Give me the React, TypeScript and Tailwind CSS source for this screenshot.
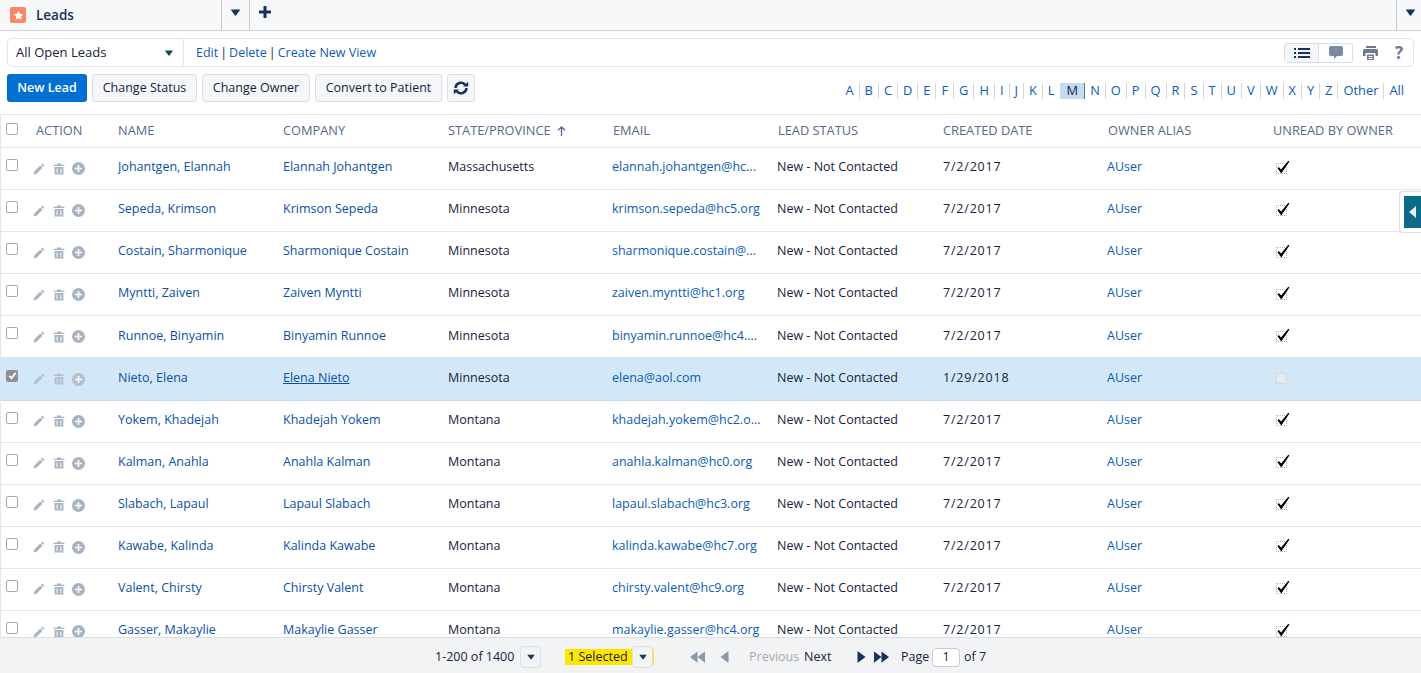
const LETTERS = "A B C D E F G H I J K L M N O P Q R S T U V W X Y Z Other All".split(" ");

const COLUMNS = ["NAME", "COMPANY", "STATE/PROVINCE", "EMAIL", "LEAD STATUS", "CREATED DATE", "OWNER ALIAS", "UNREAD BY OWNER"];

const LEADS = [
  ["Johantgen, Elannah", "Elannah Johantgen", "Massachusetts", "elannah.johantgen@hc..."],
  ["Sepeda, Krimson", "Krimson Sepeda", "Minnesota", "krimson.sepeda@hc5.org"],
  ["Costain, Sharmonique", "Sharmonique Costain", "Minnesota", "sharmonique.costain@..."],
  ["Myntti, Zaiven", "Zaiven Myntti", "Minnesota", "zaiven.myntti@hc1.org"],
  ["Runnoe, Binyamin", "Binyamin Runnoe", "Minnesota", "binyamin.runnoe@hc4...."],
  ["Nieto, Elena", "Elena Nieto", "Minnesota", "elena@aol.com"],
  ["Yokem, Khadejah", "Khadejah Yokem", "Montana", "khadejah.yokem@hc2.o..."],
  ["Kalman, Anahla", "Anahla Kalman", "Montana", "anahla.kalman@hc0.org"],
  ["Slabach, Lapaul", "Lapaul Slabach", "Montana", "lapaul.slabach@hc3.org"],
  ["Kawabe, Kalinda", "Kalinda Kawabe", "Montana", "kalinda.kawabe@hc7.org"],
  ["Valent, Chirsty", "Chirsty Valent", "Montana", "chirsty.valent@hc9.org"],
  ["Gasser, Makaylie", "Makaylie Gasser", "Montana", "makaylie.gasser@hc4.org"],
];

function Caret({ className }: { className: string }) {
  return (
    <svg viewBox="0 0 12 8" className={className} fill="currentColor" aria-hidden="true">
      <path d="M0.5 0.5h11L6.6 7.3a.8.8 0 0 1-1.2 0z" />
    </svg>
  );
}

function RowActions({ dim }: { dim: boolean }) {
  return (
    <div className={`flex items-center ${dim ? "text-[#b4bfcc]" : "text-[#a8b3c1]"}`}>
      <svg viewBox="0 0 12 12" className="w-3 h-3 ml-[32px]" fill="currentColor" aria-hidden="true">
        <path d="M9.2.6l2.2 2.2-1.2 1.2L8 1.800zM7.300 2.500l2.200 2.200-6 6L.6 11.400l.7-2.900z" />
      </svg>
      <svg viewBox="0 0 12 12" className="w-3 h-3 ml-[8px]" fill="currentColor" aria-hidden="true">
        <path d="M4 .5h4v1.200h3.400v1.200H.6V1.700H4zM1.600 4h8.800v7.600H1.600zM3.600 5.400v4.800h1V5.400zm3.800 0v4.800h1V5.400z" />
      </svg>
      <span className="ml-[7px] w-[13px] h-[13px] rounded-full bg-current flex items-center justify-center">
        <svg viewBox="0 0 7 7" className="w-[7px] h-[7px] text-white" fill="currentColor" aria-hidden="true">
          <path d="M2.700 0h1.600v2.700H7v1.600H4.300V7H2.700V4.300H0V2.700h2.700z" />
        </svg>
      </span>
    </div>
  );
}

function LeadRow({ lead }: { lead: string[] }) {
  const selected = lead[0] === "Nieto, Elena";
  return (
    <div
      className={`grid grid-cols-[117px_165px_165px_165px_165px_165px_165px_165px_1fr] items-center h-[42.1px] pb-[2px] shrink-0 border-b text-[12.5px] ${
        selected ? "bg-[#d2e8f9] border-[#c5dcec]" : "border-[#e3e6eb]"
      }`}
    >
      <div className="relative flex items-center mt-[2px]">
        {selected ? (
          <span className="absolute left-[5px] -top-[3px] w-3 h-3 rounded-[2px] bg-[#8e8e93] flex items-center justify-center">
            <svg viewBox="0 0 10 10" className="w-[9px] h-[9px] text-white" fill="none" stroke="currentColor" strokeWidth="2" aria-hidden="true">
              <path d="M1.500 5.500l2.500 2.500 4.500-6" />
            </svg>
          </span>
        ) : (
          <span className="absolute left-[5px] -top-[3px] w-3 h-3 rounded-[2px] border border-[#a8a8a8] bg-white" />
        )}
        <RowActions dim={selected} />
      </div>
      <a className="text-[#0b4fa8] truncate">{lead[0]}</a>
      <a className={`text-[#0b4fa8] truncate ${selected ? "underline" : ""}`}>{lead[1]}</a>
      <span className="text-[#16233a]">{lead[2]}</span>
      <a className="text-[#0b5cb5] whitespace-nowrap -ml-px">{lead[3]}</a>
      <span className="text-[#16233a] -ml-px">New - Not Contacted</span>
      <span className="text-[#16233a] tracking-[0.8px]">{selected ? "1/29/2018" : "7/2/2017"}</span>
      <a className="text-[#0b5cb5] -ml-px">AUser</a>
      <div className="relative h-[14px]">
        {selected ? (
          <span className="absolute left-[3px] top-[2px] w-[11px] h-[11px] border border-[#d5d9de] bg-[#e4ebf1]" />
        ) : (
          <>
            <span className="absolute left-[3px] top-[2px] w-[11px] h-[11px] border border-dotted border-[#b5b5b5]" />
            <svg viewBox="0 0 14 14" className="absolute left-[3px] -top-px w-[14px] h-[14px] text-black" fill="currentColor" aria-hidden="true">
              <path d="M1.500 8.300l1.300-1.200L5.100 9.500 12.300.8l1.100.7L5.300 13.400z" />
            </svg>
          </>
        )}
      </div>
    </div>
  );
}

export default function App() {
  return (
    <div className="relative h-[673px] overflow-hidden flex flex-col bg-white text-[12.5px] font-['Open_Sans','Noto_Sans',sans-serif] text-[#16233a]">
      {/* Tab bar */}
      <div className="flex items-stretch h-[31px] shrink-0 bg-[#f7f8fa] border-b border-[#cfd2d6]">
        <div className="w-[222px] flex items-center border-r border-[#c6c9cd] pl-[10px]">
          <span className="w-4 h-4 rounded-[2px] bg-[#f88962] flex items-center justify-center">
            <svg viewBox="0 0 12 12" className="w-[11px] h-[11px] text-white" fill="currentColor" aria-hidden="true">
              <path d="M6 .8l1.600 3.300 3.600.5-2.600 2.500.6 3.600L6 9l-3.200 1.700.6-3.600L.8 4.600l3.600-.5z" />
            </svg>
          </span>
          <span className="ml-[10px] text-[13.5px] font-semibold text-[#16325c]">Leads</span>
        </div>
        <div className="w-[28px] flex justify-center pt-[9px] border-r border-[#c6c9cd]">
          <Caret className="w-[11px] h-[7px] text-[#16325c]" />
        </div>
        <div className="flex-1 pl-[9px] pt-[6px]">
          <svg viewBox="0 0 12 12" className="w-[12px] h-[12px] text-[#16325c]" fill="currentColor" aria-hidden="true">
            <path d="M4.500 0h3v4.500H12v3H7.500V12h-3V7.500H0v-3h4.500z" />
          </svg>
        </div>
        <div className="w-[25px] pl-[8px] pt-[9px] border-l border-[#c6c9cd]">
          <Caret className="w-[11px] h-[7px] text-[#16325c]" />
        </div>
      </div>

      {/* View selector */}
      <div className="flex items-center h-[29px] mt-[7px] mx-[7px] shrink-0 rounded-[5px] border border-[#e0e5ee] w-[1407px]">
        <div className="w-[176px] h-full flex items-center justify-between pl-[8px] pr-[9px] border-r border-[#e0e5ee]">
          <span className="text-[13px] mt-px">All Open Leads</span>
          <Caret className="w-[10px] h-[6px] text-[#0e4a54]" />
        </div>
        <div className="pl-[12px] mt-px flex items-center gap-[2px] text-[12.5px]">
          <a className="text-[#0b5cb5]">Edit</a>
          <span className="text-[#16233a]">|</span>
          <a className="text-[#0b5cb5]">Delete</a>
          <span className="text-[#16233a]">|</span>
          <a className="text-[#0b5cb5]">Create New View</a>
        </div>
        <div className="ml-auto flex items-center pr-[8px]">
          <div className="flex h-[20px] rounded-[3px] border border-[#d8dde6]">
            <span className="w-[34px] flex items-center justify-center bg-[#f4f6f9] border-r border-[#d8dde6]">
              <svg viewBox="0 0 16 10" className="w-4 h-[10px] text-[#16325c]" fill="currentColor" aria-hidden="true">
                <path d="M0 0h2v2H0zM4 0h12v2H4zM0 4h2v2H0zM4 4h12v2H4zM0 8h2v2H0zM4 8h12v2H4z" />
              </svg>
            </span>
            <span className="w-[33px] flex items-center justify-center">
              <svg viewBox="0 0 14 13" className="w-[14px] h-[13px] text-[#7d8ba0]" fill="currentColor" aria-hidden="true">
                <path d="M2 0h10a2 2 0 0 1 2 2v6a2 2 0 0 1-2 2H8l-3 3v-3H2a2 2 0 0 1-2-2V2a2 2 0 0 1 2-2z" />
              </svg>
            </span>
          </div>
          <svg viewBox="0 0 15 14" className="ml-[10px] w-[15px] h-[14px] text-[#6b7a91]" fill="currentColor" aria-hidden="true">
            <path d="M3 0h10v2H3zM1.500 3h12A1.500 1.500 0 0 1 15 4.500V10h-2.500V7h-10v3H0V4.500A1.500 1.500 0 0 1 1.500 3zM4 8.500h7V14H4zM5.500 10v1h4v-1zm0 2v1h4v-1z" />
          </svg>
          <span className="ml-[17px] w-[10px] text-[17px] font-bold leading-none text-[#6b7a91]">?</span>
        </div>
      </div>

      {/* Action buttons and letter filter */}
      <div className="flex items-center h-[28px] mt-[7px] pl-[7px] pr-[12px] shrink-0">
        <button className="w-[80px] h-[28px] rounded-[3px] bg-[#0070d2] text-white text-[12.5px] font-semibold">New Lead</button>
        <button className="ml-[5px] w-[105px] h-[28px] rounded-[3px] border border-[#dddfe3] bg-[#f4f6f9]">Change Status</button>
        <button className="ml-[5px] w-[108px] h-[28px] rounded-[3px] border border-[#dddfe3] bg-[#f4f6f9]">Change Owner</button>
        <button className="ml-[5px] w-[127px] h-[28px] rounded-[3px] border border-[#dddfe3] bg-[#f4f6f9]">Convert to Patient</button>
        <button className="ml-[5px] w-[28px] h-[28px] rounded-[3px] border border-[#dddfe3] bg-[#f4f6f9] flex items-center justify-center">
          <svg viewBox="0 0 18 14" className="w-[18px] h-[14px] text-[#16325c]" fill="none" stroke="currentColor" strokeWidth="2.5" aria-hidden="true">
            <path d="M3.500 7a5.500 5.500 0 0 1 9.800-3.200M14.500 7a5.500 5.500 0 0 1-9.800 3.200" />
            <path d="M10.800 5.500h5.400V0.800zM7.200 8.500H1.800v4.700z" fill="currentColor" stroke="none" />
          </svg>
        </button>
        <div className="ml-auto mt-[5px] flex items-center h-[16px] text-[#0b5cb5] text-[12.85px]">
          {LETTERS.map((l) => (
            <a
              key={l}
              className={`h-[16px] flex items-center px-[5px] leading-none border-r last:border-r-0 ${
                l === "M" ? "bg-[#c3dcf5] text-[#16233a] border-[#6d6d6d] px-[6px]" : "border-[#d3d6da]"
              }`}
            >
              {l}
            </a>
          ))}
        </div>
      </div>

      {/* Table */}
      <div className="flex-1 min-h-0 mt-[12px] overflow-hidden border-l-2 border-[#e3e6eb] -ml-px flex flex-col">
        <div className="grid grid-cols-[117px_165px_165px_165px_165px_165px_165px_165px_1fr] items-center h-[34px] shrink-0 border-y border-[#e0e3e8] text-[12.8px] font-medium text-[#54698d]">
          <div className="relative flex items-center">
            <span className="absolute left-[5px] top-[2px] w-3 h-3 rounded-[2px] border border-[#a8a8a8] bg-white" />
            <span className="ml-[35px]">ACTION</span>
          </div>
          {COLUMNS.map((c) => (
            <span key={c} className="flex items-center whitespace-nowrap">
              {c}
              {c === "STATE/PROVINCE" && (
                <svg viewBox="0 0 9 10" className="ml-[6px] w-[9px] h-[10px]" fill="none" stroke="currentColor" strokeWidth="1.3" aria-hidden="true">
                  <path d="M4.500 10V1M1 4.300L4.500 1 8 4.300" />
                </svg>
              )}
            </span>
          ))}
        </div>
        {LEADS.map((lead) => (
          <LeadRow key={lead[0]} lead={lead} />
        ))}
      </div>

      {/* Footer pager */}
      <div className="h-[36px] shrink-0 flex items-center pt-[3px] bg-[#f1f3f4] border-t border-[#d8dde6] text-[12.5px]">
        <span className="ml-[435px] w-[85px]">1-200 of 1400</span>
        <span className="w-[21px] h-[22px] rounded-[4px] border border-[#dde0e4] flex items-center justify-center">
          <Caret className="w-[8px] h-[6px] text-[#16325c]" />
        </span>
        <div className="ml-[24px] flex items-center h-[16px] bg-[#ffe600] w-[89px] pl-[3px]">
          <span className="whitespace-nowrap w-[64px]">1 Selected</span>
          <span className="w-[21px] h-[22px] rounded-[4px] bg-[#f1f3f4] border border-[#dde0e4] flex items-center justify-center">
            <Caret className="w-[8px] h-[6px] text-[#16325c]" />
          </span>
        </div>
        <svg viewBox="0 0 16 12" className="ml-[36px] w-[15px] h-[12px] text-[#8a97aa]" fill="currentColor" aria-hidden="true">
          <path d="M8 0v12L0 6zM16 0v12L8 6z" />
        </svg>
        <svg viewBox="0 0 8 12" className="ml-[15px] w-[9px] h-[12px] text-[#8a97aa]" fill="currentColor" aria-hidden="true">
          <path d="M8 0v12L0 6z" />
        </svg>
        <span className="ml-[20px] w-[55px] text-[#a7abb2]">Previous</span>
        <span className="w-[53px]">Next</span>
        <svg viewBox="0 0 8 12" className="w-[9px] h-[12px] text-[#16325c]" fill="currentColor" aria-hidden="true">
          <path d="M0 0v12l8-6z" />
        </svg>
        <svg viewBox="0 0 16 12" className="ml-[8px] w-[15px] h-[12px] text-[#16325c]" fill="currentColor" aria-hidden="true">
          <path d="M0 0v12l8-6zM8 0v12l8-6z" />
        </svg>
        <span className="ml-[12px] w-[31px]">Page</span>
        <span className="w-[28px] h-[19px] rounded-[4px] border border-[#c8ccd2] bg-white flex items-center justify-center">1</span>
        <span className="ml-[4px]">of 7</span>
      </div>

      {/* Side panel handle */}
      <div className="absolute right-0 top-[191px] w-[22px] h-[42px] rounded-l-[4px] border border-r-0 border-[#d8dde6] bg-white pl-[4px] py-[4px]">
        <div className="h-full bg-[#0b6a85] flex items-center justify-center">
          <svg viewBox="0 0 7 12" className="w-[7px] h-[12px] text-[#e9eef0]" fill="currentColor" aria-hidden="true">
            <path d="M7 0v12L0 6z" />
          </svg>
        </div>
      </div>
    </div>
  );
}
